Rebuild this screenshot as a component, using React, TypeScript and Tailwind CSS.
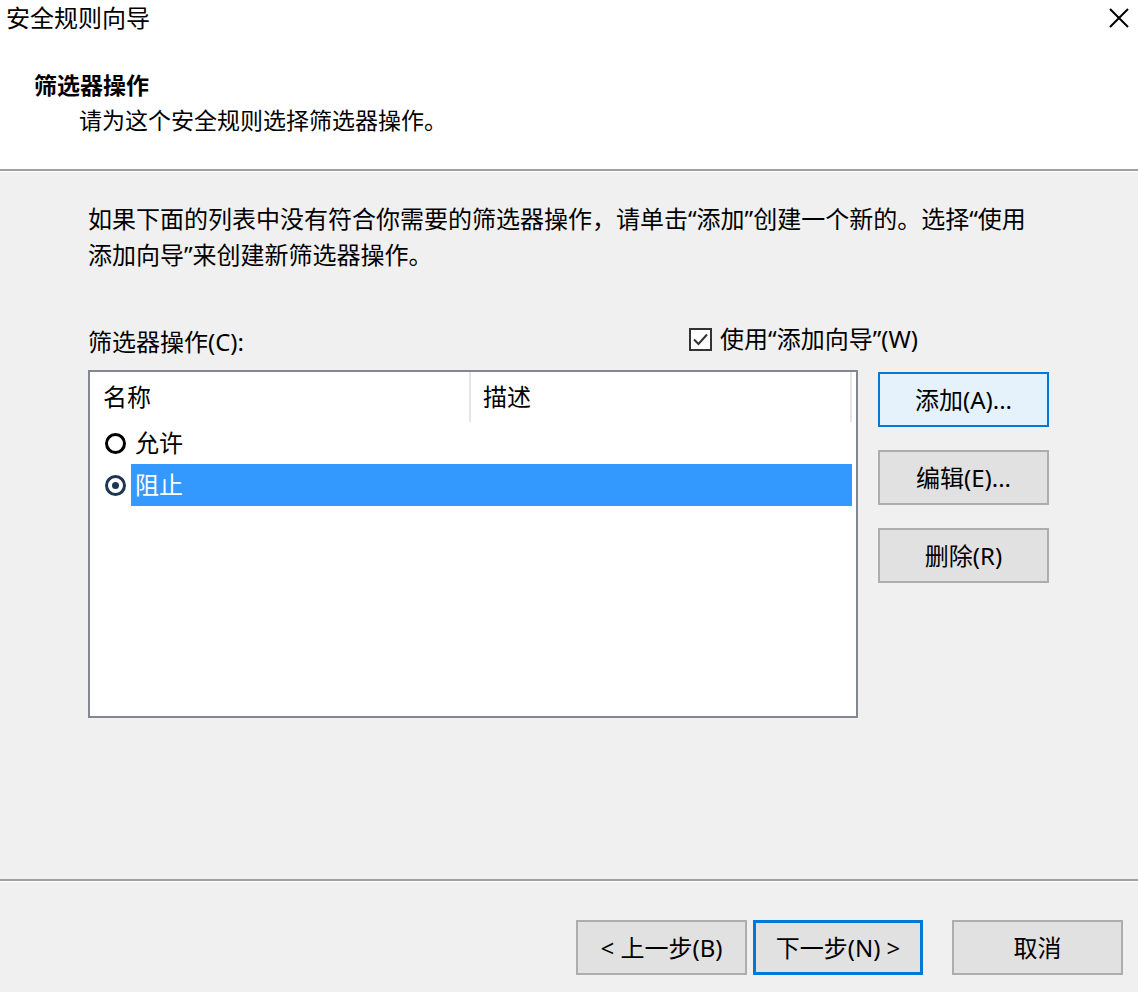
import React from 'react';

const font = "font-['Segoe_UI','Noto_Sans','Noto_Sans_CJK_SC',sans-serif]";

// ----- small drawn pieces -----

const CloseIcon = () => (
  <svg width="22" height="22" viewBox="0 0 22 22" className="text-black">
    <path d="M2 2 L20 20 M20 2 L2 20" stroke="currentColor" strokeWidth="2" />
  </svg>
);

const CheckBox = () => (
  <svg width="23" height="23" viewBox="0 0 23 23">
    <rect x="1" y="1" width="21" height="21" fill="#fff" stroke="#333" strokeWidth="2" />
    <path d="M5 11.5 L9.5 16 L18 6.5" fill="none" stroke="#333" strokeWidth="2" />
  </svg>
);

const RadioIcon: React.FC<{ checked?: boolean }> = ({ checked }) => (
  <svg width="23" height="23" viewBox="0 0 23 23">
    <circle cx="11.5" cy="11.5" r="9" fill="#fff" stroke={checked ? '#1e3553' : '#000'} strokeWidth="3" />
    {checked && <circle cx="11.5" cy="11.5" r="3.5" fill="#1e3553" />}
  </svg>
);

// ----- buttons -----

interface BtnProps {
  label: string;
  focused?: boolean;
  className?: string;
}

const SideButton: React.FC<BtnProps> = ({ label, focused }) => (
  <button
    className={
      focused
        ? 'w-[171px] h-[55px] border-2 border-[#0078d7] bg-[#e5f1fb] text-[24px] text-black'
        : 'w-[171px] h-[55px] border-2 border-[#adadad] bg-[#e1e1e1] text-[24px] text-black'
    }
  >
    {label}
  </button>
);

const NavButton: React.FC<BtnProps> = ({ label, focused, className }) => (
  <button
    className={
      (focused
        ? 'h-[55px] border-[3px] border-[#0078d7] bg-[#e1e1e1] text-[24px] text-black '
        : 'h-[55px] border-2 border-[#adadad] bg-[#e1e1e1] text-[24px] text-black ') + (className ?? '')
    }
  >
    {label}
  </button>
);

// ----- list of filter actions -----

const ActionList = () => (
  <div className="w-[770px] h-[348px] border-2 border-[#828790] bg-white">
    <div className="flex h-[50px] items-center">
      <div className="w-[381px] h-full flex items-center pl-[13px] border-r-2 border-[#e5e5e5]">名称</div>
      <div className="flex-1 h-full flex items-center pl-[12px] border-r-2 border-[#e5e5e5]">描述</div>
      <div className="w-[4px]" />
    </div>
    <div className="flex items-center h-[42px] pl-[14px]">
      <RadioIcon />
      <span className="ml-[8px]">允许</span>
    </div>
    <div className="flex items-center h-[42px] pl-[14px]">
      <RadioIcon checked />
      <div className="ml-[4px] flex-1 h-full bg-[#3399ff] text-white flex items-center pl-[4px] mr-[4px]">
        阻止
      </div>
    </div>
  </div>
);

export default function App() {
  return (
    <div className={`${font} w-[1138px] h-[992px] bg-[#f0f0f0] text-[24px] text-black flex flex-col overflow-hidden`}>
      {/* header */}
      <div className="bg-white h-[169px] flex flex-col">
        <div className="flex items-center justify-between pl-[6px] pr-[8px] h-[36px]">
          <span>安全规则向导</span>
          <CloseIcon />
        </div>
        <div className="pl-[34px] mt-[32px] font-bold leading-[34px] text-[23px]">筛选器操作</div>
        <div className="pl-[79px] leading-[36px] text-[23px]">请为这个安全规则选择筛选器操作。</div>
      </div>
      <div className="h-[2px] bg-[#a0a0a0]" />
      <div className="h-[1px] bg-white" />

      {/* body */}
      <div className="flex-1 pl-[88px] pt-[29px]">
        <p className="w-[955px] leading-[36px]">
          如果下面的列表中没有符合你需要的筛选器操作，请单击“添加”创建一个新的。选择“使用添加向导”来创建新筛选器操作。
        </p>
        <div className="mt-[50px] flex">
          <div className="flex flex-col">
            <div className="flex items-end justify-between h-[40px] pb-[3px]">
              <span>筛选器操作(C):</span>
              <span className="flex items-center gap-[8px] mr-[-60px] mb-[3px]">
                <CheckBox />
                使用“添加向导”(W)
              </span>
            </div>
            <div className="mt-[7px]">
              <ActionList />
            </div>
          </div>
          <div className="ml-[20px] mt-[49px] flex flex-col gap-[25px]">
            <SideButton label="添加(A)..." focused />
            <div className="-mt-[2px]">
              <SideButton label="编辑(E)..." />
            </div>
            <div className="-mt-[2px]">
              <SideButton label="删除(R)" />
            </div>
          </div>
        </div>
      </div>

      {/* footer */}
      <div className="h-[2px] bg-[#a0a0a0]" />
      <div className="h-[1px] bg-white" />
      <div className="h-[110px] flex items-start pt-[38px] pl-[576px]">
        <NavButton label="< 上一步(B)" className="w-[171px]" />
        <NavButton label="下一步(N) >" focused className="w-[170px] ml-[6px]" />
        <NavButton label="取消" className="w-[171px] ml-[29px]" />
      </div>
    </div>
  );
}
